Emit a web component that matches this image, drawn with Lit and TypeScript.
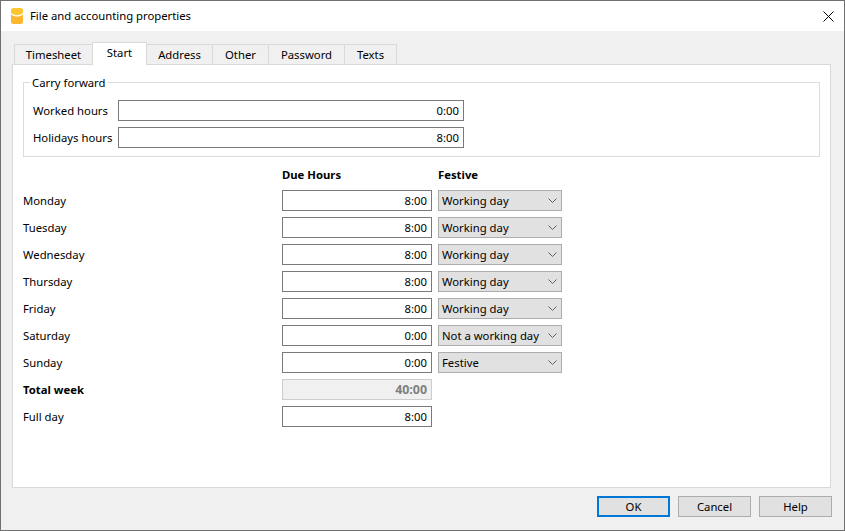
import { LitElement, html, css } from 'lit';
import { customElement, state } from 'lit/decorators.js';
import { classMap } from 'lit/directives/class-map.js';

const TABS = ['Timesheet', 'Start', 'Address', 'Other', 'Password', 'Texts'];
const TAB_WIDTHS = [78, 54, 66, 56, 76, 52];

const DAYS = [
    { name: 'Monday', hours: '8:00', festive: 'Working day' },
    { name: 'Tuesday', hours: '8:00', festive: 'Working day' },
    { name: 'Wednesday', hours: '8:00', festive: 'Working day' },
    { name: 'Thursday', hours: '8:00', festive: 'Working day' },
    { name: 'Friday', hours: '8:00', festive: 'Working day' },
    { name: 'Saturday', hours: '0:00', festive: 'Not a working day' },
    { name: 'Sunday', hours: '0:00', festive: 'Festive' },
];

@customElement('app-root')
export class AppRoot extends LitElement {
    static styles = css`
    :host {
      display: block;
      width: 845px;
      height: 531px;
      font-family: 'Noto Sans', sans-serif;
      font-size: 11.3px;
      line-height: 16px;
      color: #000;
    }

    .window {
      box-sizing: border-box;
      width: 845px;
      height: 531px;
      display: flex;
      flex-direction: column;
      border: 1px solid #707070;
      background: #f0f0f0;
    }

    .titlebar {
      height: 30px;
      flex: none;
      display: flex;
      align-items: center;
      background: #fff;
      padding: 0 10px;
    }

    .title {
      margin-left: 7px;
      flex: 1;
    }

    .body {
      flex: 1;
      display: flex;
      flex-direction: column;
      padding: 0 13px 0 11px;
    }

    .tabs {
      height: 33px;
      flex: none;
      display: flex;
      align-items: flex-end;
      padding-left: 2px;
      position: relative;
      z-index: 1;
    }

    .tab {
      box-sizing: border-box;
      height: 20px;
      margin-right: -1px;
      display: flex;
      align-items: center;
      justify-content: center;
      border: 1px solid #d9d9d9;
      border-bottom: none;
      background: #f0f0f0;
    }

    .tab.active {
      height: 23px;
      margin-bottom: -1px;
      padding-bottom: 2px;
      background: #fff;
      position: relative;
      z-index: 1;
    }

    .pane {
      box-sizing: border-box;
      height: 424px;
      flex: none;
      border: 1px solid #d9d9d9;
      background: #fff;
      padding: 9px 10px 0;
    }

    fieldset {
      margin: 0;
      padding: 9px 9px 8px;
      border: 1px solid #dcdcdc;
      display: grid;
      grid-template-columns: 85px 346px;
      row-gap: 6px;
      align-items: center;
    }

    legend {
      margin-left: -3px;
      padding: 1px 2px 0 2px;
    }

    .field {
      box-sizing: border-box;
      height: 21px;
      display: flex;
      align-items: center;
      justify-content: flex-end;
      padding: 0 4px;
      border: 1px solid #7a7a7a;
      background: #fff;
    }

    .field.readonly {
      border-color: #cccccc;
      background: #f0f0f0;
      color: #7f7f7f;
      font-size: 12.4px;
      font-weight: 700;
    }

    .schedule {
      margin-top: 10px;
      display: grid;
      grid-template-columns: 253px 150px 124px;
      column-gap: 6px;
      row-gap: 6px;
      grid-template-rows: 17px;
      align-items: center;
    }

    .schedule .label {
      grid-column: 1;
    }

    .bold {
      font-weight: 700;
    }

    .head {
      align-self: start;
    }

    .select {
      box-sizing: border-box;
      height: 21px;
      display: flex;
      align-items: center;
      justify-content: space-between;
      padding: 0 4px 0 3px;
      border: 1px solid #adadad;
      background: #e1e1e1;
    }

    .footer {
      flex: 1;
      display: flex;
      justify-content: flex-end;
      gap: 8px;
      padding: 8px 0 0;
      margin-right: -1px;
    }

    .btn {
      box-sizing: border-box;
      width: 73px;
      height: 21px;
      display: flex;
      align-items: center;
      justify-content: center;
      border: 1px solid #adadad;
      background: #e1e1e1;
    }

    .btn.default {
      border: 2px solid #0078d7;
    }
  `;

    @state() private activeTab = 'Start';

    private renderSelect(value: string) {
        return html`
      <div class="select">
        <span>${value}</span>
        <svg width="9" height="5" viewBox="0 0 9 5" fill="none" stroke="#606060">
          <path d="M0.5 0.5 L4.5 4.5 L8.5 0.5" />
        </svg>
      </div>
    `;
    }

    render() {
        return html`
      <div class="window">
        <div class="titlebar">
          <svg width="12" height="16" viewBox="0 0 12 16">
            <path d="M0 2.5 Q0 0 2.5 0 H9.5 Q12 0 12 2.5 V5 Q6 9.5 0 5 Z" fill="#fdc62e" />
            <path d="M0 6.4 Q6 10.8 12 6.4 V14 Q12 16 9.5 16 H2.5 Q0 16 0 14 Z" fill="#fbb730" />
          </svg>
          <span class="title">File and accounting properties</span>
          <svg width="11" height="11" viewBox="0 0 11 11" stroke="#000" stroke-width="1" fill="none">
            <path d="M0.5 0.5 L10.5 10.5 M10.5 0.5 L0.5 10.5" />
          </svg>
        </div>
        <div class="body">
          <div class="tabs">
            ${TABS.map((tab, i) => html`
              <div
                class=${classMap({ tab: true, active: tab === this.activeTab })}
                style="width: ${TAB_WIDTHS[i] + 1}px"
                @click=${() => { this.activeTab = tab; }}
              >${tab}</div>
            `)}
          </div>
          <div class="pane">
            <fieldset>
              <legend>Carry forward</legend>
              <span>Worked hours</span>
              <div class="field">0:00</div>
              <span>Holidays hours</span>
              <div class="field">8:00</div>
            </fieldset>
            <div class="schedule">
              <span></span>
              <span class="bold head">Due Hours</span>
              <span class="bold head">Festive</span>
              ${DAYS.map((day) => html`
                <span class="label">${day.name}</span>
                <div class="field">${day.hours}</div>
                ${this.renderSelect(day.festive)}
              `)}
              <span class="label bold">Total week</span>
              <div class="field readonly">40:00</div>
              <span class="label">Full day</span>
              <div class="field">8:00</div>
            </div>
          </div>
          <div class="footer">
            <div class="btn default">OK</div>
            <div class="btn">Cancel</div>
            <div class="btn">Help</div>
          </div>
        </div>
      </div>
    `;
    }
}
